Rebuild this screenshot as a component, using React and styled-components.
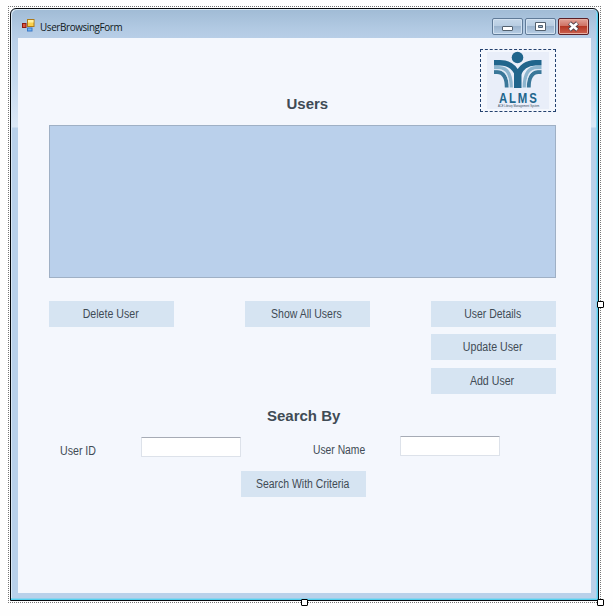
import React from "react";
import styled, { createGlobalStyle, css } from "styled-components";

const GlobalStyle = createGlobalStyle`
  * { box-sizing: border-box; }
  html, body { margin: 0; padding: 0; }
  body {
    width: 613px;
    height: 616px;
    overflow: hidden;
    background: #fefefe;
    font-family: "Liberation Sans", Arial, sans-serif;
    font-size: 12px;
    color: #414b55;
  }
`;

const Designer = styled.main`
  width: 613px;
  height: 616px;
  padding: 6px 0 0 8px;
`;

const Selection = styled.div`
  position: relative;
  width: 593px;
  height: 597px;
  padding: 2px;
  background:
    repeating-linear-gradient(90deg, #777 0 1px, #fefefe 1px 2px) top / 100% 1px no-repeat,
    repeating-linear-gradient(90deg, #777 0 1px, #fefefe 1px 2px) bottom / 100% 1px no-repeat,
    repeating-linear-gradient(180deg, #777 0 1px, #fefefe 1px 2px) left / 1px 100% no-repeat,
    repeating-linear-gradient(180deg, #777 0 1px, #fefefe 1px 2px) right / 1px 100% no-repeat;
`;

const Handle = styled.span`
  position: absolute;
  width: 7px;
  height: 7px;
  border: 1px solid #000;
  border-radius: 1px;
  background: #fff;
  ${({ $place }) =>
    ({
      right: css`right: -3px; top: 295px;`,
      bottom: css`left: 293px; bottom: -3px;`,
      corner: css`right: -3px; bottom: -3px;`,
    })[$place]}
`;

const Window = styled.section`
  width: 589px;
  height: 593px;
  display: flex;
  flex-direction: column;
  border: 1px solid #05090d;
  border-radius: 6px 6px 0 0;
  padding: 0 7px 7px;
  background: linear-gradient(
    180deg,
    #a0bbd5 0,
    #b2cae3 20px,
    #bad0e8 32px,
    #c5d9ee 70px,
    #dbe8f6 118px,
    #b9d1ea 119px,
    #b9d1ea 100%
  );
  box-shadow: inset -1px -1px 0 #55d0ee, inset -2px -2px 0 #8fd3ef, inset 1px 1px 0 #d9e8f5;
`;

const TitleBar = styled.header`
  flex: 0 0 29px;
  display: flex;
  align-items: flex-start;
  padding: 9px 2px 0 4px;
`;

const FormIcon = styled.svg`
  width: 13px;
  height: 13px;
  margin-top: 1px;
`;

const Title = styled.h1`
  flex: 1;
  margin: 2px 0 0 5px;
  font: 400 10.5px/15px "Open Sans", "Noto Sans", sans-serif;
  letter-spacing: -0.4px;
  color: #101820;
`;

const Captions = styled.div`
  display: flex;
  gap: 2px;
`;

const CaptionButton = styled.button`
  width: 31px;
  height: 17px;
  padding: 0;
  display: grid;
  place-items: center;
  border: 1px solid ${({ $close }) => ($close ? "#5b2027" : "#607b98")};
  border-radius: 2px;
  background: ${({ $close }) =>
    $close
      ? "linear-gradient(#e2a398 0, #cf7264 45%, #b53723 50%, #cc6150 100%)"
      : "linear-gradient(#c6d8ea 0, #b8cde2 45%, #9bb4ce 50%, #b7cee5 100%)"};
  box-shadow: inset 0 0 0 1px ${({ $close }) => ($close ? "#e8b0a3" : "#d3e2f1")};
`;

const Client = styled.div`
  flex: 1;
  padding: 11px 35px 0 31px;
  background: #f4f7fd;
`;

const Masthead = styled.div`
  display: grid;
  grid-template-columns: 1fr 76px;
  height: 76px;
`;

const Heading = styled.h2`
  margin: 0;
  font-size: 15px;
  line-height: 18px;
  font-weight: 700;
  color: #404b55;
`;

const UsersHeading = styled(Heading)`
  padding: 46px 0 0 237.5px;
`;

const SearchHeading = styled(Heading)`
  padding: 13px 0 0 218px;
`;

const LogoFrame = styled.div`
  width: 76px;
  height: 63px;
  display: flex;
  justify-content: center;
  border: 1px dashed #24426f;
`;

const UsersGrid = styled.div`
  width: 507px;
  height: 153px;
  border: 1px solid #9fb0c5;
  background: #bad0eb;
`;

const Actions = styled.div`
  display: grid;
  grid-template-columns: 196px 186px 125px;
  margin-top: 23px;
`;

const ActionStack = styled.div`
  display: grid;
  grid-template-rows: 33px 34px 26px;
`;

const FlatButton = styled.button`
  display: block;
  width: 125px;
  height: 26px;
  padding: 0 2px 0 0;
  border: 0;
  background: #d6e4f2;
  color: inherit;
  font: inherit;
  line-height: 26px;
`;

const Narrow = styled.span`
  display: inline-block;
  white-space: nowrap;
  transform: scaleX(${({ $ratio }) => $ratio ?? 0.885});
  transform-origin: ${({ $origin }) => $origin ?? "center"};
`;

const Criteria = styled.div`
  display: grid;
  grid-template-columns: 92px 172px 87px 100px;
  align-items: start;
  padding-top: 11px;
`;

const Label = styled.label`
  padding: ${({ $drop }) => $drop}px 0 0 ${({ $indent }) => $indent ?? 0}px;
  line-height: 16px;
`;

const Field = styled.input`
  width: 100px;
  height: 20px;
  margin: ${({ $drop }) => $drop ?? 0}px 0 0;
  padding: 0 3px;
  border: 1px solid #dde2ea;
  border-top-color: #a6abb5;
  border-radius: 1px;
  background: #fff;
  font: inherit;
`;

const SearchRow = styled.div`
  padding: 12px 0 0 192px;
`;

function LogoMark() {
  return (
    <svg width="64" height="61" viewBox="0 0 64 61" overflow="visible" role="img" aria-label="ALMS">
      <rect x="1" y="2" width="62" height="57" fill="#e9eef9" />
      <circle cx="31.5" cy="7.5" r="5.8" fill="#20658c" />
      <g fill="none">
        <path d="M8 22H11C18 22 20.8 29 20.8 37.5M55.5 22H52.5C45.5 22 42.7 29 42.7 37.5" stroke="#3a7799" strokeWidth="4" />
        <path d="M8 17.6H13C21.5 17.6 25.2 25 25.2 37.5M55.5 17.6H50.5C42 17.6 38.3 25 38.3 37.5" stroke="#8db5ce" strokeWidth="3.4" />
        <path d="M8 12.7H14C24 12.7 29 18 31.75 25C34.5 18 39.5 12.7 49.5 12.7H55.5" stroke="#20658c" strokeWidth="5.4" />
        <path d="M31.75 20V38" stroke="#20658c" strokeWidth="7.5" />
        <path d="M8 19.7H12C19.8 19.7 23.2 28 23.2 38M55.5 19.7H51.5C43.7 19.7 40.3 28 40.3 38" stroke="#dbe8f3" strokeWidth=".9" />
      </g>
      <g fontFamily="Liberation Sans" fontWeight="700" fontSize="15" fill="#20658c" transform="translate(13 52.6) scale(.76 1)">
        <text letterSpacing="2.4">ALMS</text>
      </g>
      <g fontFamily="Liberation Sans" fontSize="3.6" fill="#34495c" transform="translate(12 57) scale(.76 1)">
        <text>ACE Library Management System</text>
      </g>
    </svg>
  );
}

function AppIcon() {
  return (
    <FormIcon viewBox="0 0 13 13">
      <rect x=".5" y="4.5" width="3.5" height="4" fill="#d95540" stroke="#8e1912" />
      <rect x="5.5" y=".5" width="6.5" height="7" fill="#f9d04c" stroke="#ad7a19" />
      <path d="M6 1h5.5v2.5H6z" fill="#fff0a0" />
      <rect x="5.5" y="9" width="4.5" height="3" fill="#70b5f6" stroke="#3977c6" />
    </FormIcon>
  );
}

function WindowButtons() {
  return (
    <Captions>
      <CaptionButton aria-label="Minimize">
        <svg width="13" height="13" viewBox="0 0 13 13">
          <rect x="1.5" y="6.5" width="10" height="4" rx=".5" fill="#fff" stroke="#53616f" />
        </svg>
      </CaptionButton>
      <CaptionButton aria-label="Maximize">
        <svg width="13" height="13" viewBox="0 0 13 13">
          <path fillRule="evenodd" d="M1.5 2.5h10v8h-10zM4.5 5.5v2h4v-2z" fill="#fff" stroke="#53616f" />
        </svg>
      </CaptionButton>
      <CaptionButton $close aria-label="Close">
        <svg width="13" height="13" viewBox="0 0 13 13">
          <path d="m2.5 3 8 7M10.5 3l-8 7" stroke="#53434c" strokeWidth="4.4" />
          <path d="m2.8 3.3 7.4 6.4M10.2 3.3 2.8 9.7" stroke="#fff" strokeWidth="2.6" />
        </svg>
      </CaptionButton>
    </Captions>
  );
}

function Action({ children, ratio }) {
  return (
    <FlatButton type="button">
      <Narrow $ratio={ratio}>{children}</Narrow>
    </FlatButton>
  );
}

export default function App() {
  return (
    <>
      <GlobalStyle />
      <Designer>
        <Selection>
          <Window>
            <TitleBar>
              <AppIcon />
              <Title>
                <Narrow $ratio={0.94} $origin="left">UserBrowsingForm</Narrow>
              </Title>
              <WindowButtons />
            </TitleBar>
            <Client>
              <Masthead>
                <UsersHeading>Users</UsersHeading>
                <LogoFrame>
                  <LogoMark />
                </LogoFrame>
              </Masthead>
              <UsersGrid />
              <Actions>
                <Action>Delete User</Action>
                <Action ratio={0.875}>Show All Users</Action>
                <ActionStack>
                  <Action ratio={0.87}>User Details</Action>
                  <Action>Update User</Action>
                  <Action>Add User</Action>
                </ActionStack>
              </Actions>
              <SearchHeading>Search By</SearchHeading>
              <Criteria>
                <Label htmlFor="user-id" $drop={7} $indent={11}>
                  <Narrow $origin="left">User ID</Narrow>
                </Label>
                <Field id="user-id" $drop={1} />
                <Label htmlFor="user-name" $drop={6}>
                  <Narrow $origin="left" $ratio={0.86}>User Name</Narrow>
                </Label>
                <Field id="user-name" />
              </Criteria>
              <SearchRow>
                <Action ratio={0.87}>Search With Criteria</Action>
              </SearchRow>
            </Client>
          </Window>
          <Handle $place="right" />
          <Handle $place="bottom" />
          <Handle $place="corner" />
        </Selection>
      </Designer>
    </>
  );
}
